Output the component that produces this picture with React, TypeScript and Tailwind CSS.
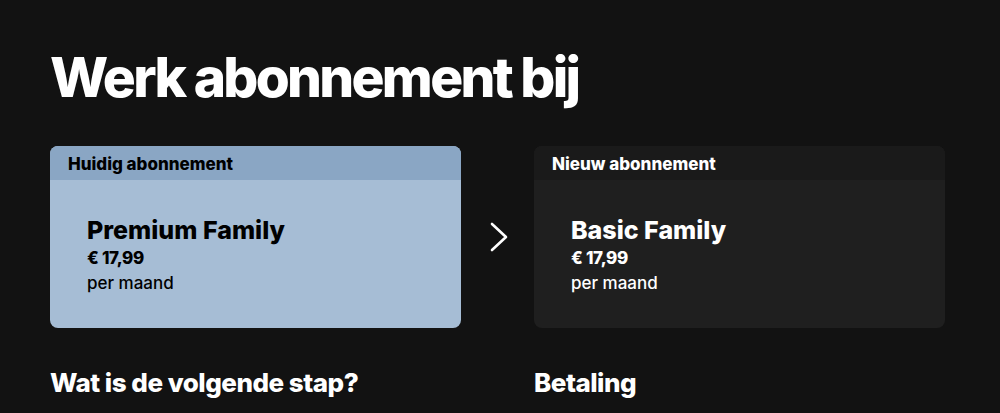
type Plan = {
  label: string;
  name: string;
  price: string;
  period: string;
};

const current: Plan = {
  label: "Huidig abonnement",
  name: "Premium Family",
  price: "€ 17,99",
  period: "per maand",
};

const next: Plan = {
  label: "Nieuw abonnement",
  name: "Basic Family",
  price: "€ 17,99",
  period: "per maand",
};

function PlanCard({ plan, highlight }: { plan: Plan; highlight?: boolean }) {
  return (
    <div
      className={
        "flex h-[182px] w-[411px] flex-col overflow-hidden rounded-lg " +
        (highlight ? "bg-[#a6bdd5] text-black" : "bg-[#1f1f1f] text-white")
      }
    >
      <div
        className={
          "flex h-[34px] items-center px-[18px] pt-[3px] text-[17px] font-extrabold " +
          (highlight ? "bg-[#8aa6c4]" : "bg-[#1a1a1a]")
        }
      >
        {plan.label}
      </div>
      <div className="flex flex-1 flex-col px-[37px] pt-[35px]">
        <div className="text-[25px] leading-[30px] font-extrabold">{plan.name}</div>
        <div className="text-[17px] leading-[26px] font-extrabold tracking-[-0.3px]">
          {plan.price}
        </div>
        <div className="text-[17px] leading-[24px] font-medium">{plan.period}</div>
      </div>
    </div>
  );
}

// chevron between the two plans
function Arrow() {
  return (
    <svg width="18" height="30" viewBox="0 0 18 30" fill="none">
      <polyline
        points="2,2 16,15 2,28"
        stroke="white"
        strokeWidth="2.6"
        strokeLinecap="round"
        strokeLinejoin="round"
      />
    </svg>
  );
}

export default function App() {
  return (
    <div
      className="h-[413px] w-[1000px] overflow-hidden bg-[#121212] px-[50px] text-white"
      style={{ fontFamily: "Inter, 'Noto Sans', sans-serif" }}
    >
      <h1 className="pt-[42px] text-[55px] leading-[70px] font-extrabold tracking-[-2.7px]">
        Werk abonnement bij
      </h1>
      <div className="mt-[34px] flex items-center">
        <PlanCard plan={current} highlight />
        <div className="flex w-[73px] justify-center pl-[2px]">
          <Arrow />
        </div>
        <PlanCard plan={next} />
      </div>
      <div className="mt-[40px] flex">
        <h2 className="w-[484px] text-[26px] leading-[30px] font-extrabold tracking-[-0.5px]">
          Wat is de volgende stap?
        </h2>
        <h2 className="text-[26px] leading-[30px] font-extrabold tracking-[-0.5px]">
          Betaling
        </h2>
      </div>
    </div>
  );
}
